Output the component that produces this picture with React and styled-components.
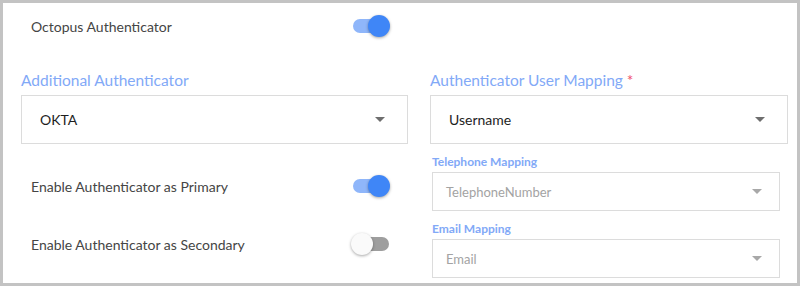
import React from 'react';
import styled, { createGlobalStyle } from 'styled-components';

const GlobalStyle = createGlobalStyle`
  body {
    margin: 0;
    background: #ffffff;
    font-family: Lato, "Open Sans", "Liberation Sans", sans-serif;
  }
`;

const Frame = styled.div`
  box-sizing: border-box;
  width: 800px;
  height: 286px;
  border: 3px solid #c3c3c3;
  background: #ffffff;
  padding: 0 10px 0 18px;
  display: grid;
  grid-template-columns: 387px 358px;
  column-gap: 22px;
  align-content: start;
`;

const Column = styled.div`
  display: flex;
  flex-direction: column;
`;

const ToggleRow = styled.div`
  display: flex;
  align-items: center;
  justify-content: space-between;
  height: ${p => p.h || 58}px;
  padding: 0 18px 0 10px;
  font-size: 14px;
  color: #454545;
`;

const Spacer = styled.div`
  height: ${p => p.h}px;
`;

const Field = styled.div`
  display: flex;
  flex-direction: column;
  margin-top: ${p => p.mt || 0}px;
  padding: ${p => (p.small ? '0 8px 0 2px' : '0')};
`;

const Label = styled.div`
  font-size: ${p => (p.small ? 12 : 15.5)}px;
  line-height: ${p => (p.small ? 16 : 20)}px;
  font-weight: ${p => (p.small ? 700 : 400)};
  color: #82a9f7;
  margin-bottom: ${p => (p.small ? 2 : 5)}px;

  span {
    color: #f0506e;
  }
`;

const Select = styled.div`
  box-sizing: border-box;
  height: ${p => (p.small ? 39 : 49)}px;
  border: 1px solid #dcdcdc;
  display: flex;
  align-items: center;
  justify-content: space-between;
  padding: ${p => (p.small ? '0 17px 0 13px' : '0 22px 0 18px')};
  font-size: ${p => (p.small ? 13 : 14)}px;
  color: ${p => (p.disabled ? '#a3a3a3' : '#1e1e1e')};
`;

const Caret = styled.span`
  width: 0;
  height: 0;
  border-left: 5px solid transparent;
  border-right: 5px solid transparent;
  border-top: 5px solid ${p => (p.disabled ? '#a8a8a8' : '#6e6e6e')};
`;

const Track = styled.div`
  position: relative;
  width: 39px;
  height: 22px;
  display: flex;
  align-items: center;

  &::before {
    content: '';
    width: 36px;
    height: 14px;
    margin-left: 2px;
    border-radius: 7px;
    background: ${p => (p.on ? '#8fb6fa' : '#9e9e9e')};
  }
`;

const Thumb = styled.div`
  position: absolute;
  top: 0;
  left: ${p => (p.on ? 17 : 0)}px;
  width: 22px;
  height: 22px;
  border-radius: 50%;
  background: ${p => (p.on ? '#3f86f7' : '#fafafa')};
  box-shadow: 0 1px 3px rgba(0, 0, 0, 0.35);
`;

function Toggle({ on }) {
  return (
    <Track on={on ? 1 : 0}>
      <Thumb on={on ? 1 : 0} />
    </Track>
  );
}

export default function App() {
  return (
    <>
      <GlobalStyle />
      <Frame>
        <Column>
          <ToggleRow h={46}>
            Octopus Authenticator
            <Toggle on />
          </ToggleRow>
          <Field mt={21}>
            <Label>Additional Authenticator</Label>
            <Select>
              OKTA
              <Caret />
            </Select>
          </Field>
          <Spacer h={13} />
          <ToggleRow>
            Enable Authenticator as Primary
            <Toggle on />
          </ToggleRow>
          <ToggleRow>
            Enable Authenticator as Secondary
            <Toggle />
          </ToggleRow>
        </Column>
        <Column>
          <Spacer h={46} />
          <Field mt={21}>
            <Label>
              Authenticator User Mapping <span>*</span>
            </Label>
            <Select>
              Username
              <Caret />
            </Select>
          </Field>
          <Field small mt={10}>
            <Label small>Telephone Mapping</Label>
            <Select small disabled>
              TelephoneNumber
              <Caret disabled />
            </Select>
          </Field>
          <Field small mt={10}>
            <Label small>Email Mapping</Label>
            <Select small disabled>
              Email
              <Caret disabled />
            </Select>
          </Field>
        </Column>
      </Frame>
    </>
  );
}
